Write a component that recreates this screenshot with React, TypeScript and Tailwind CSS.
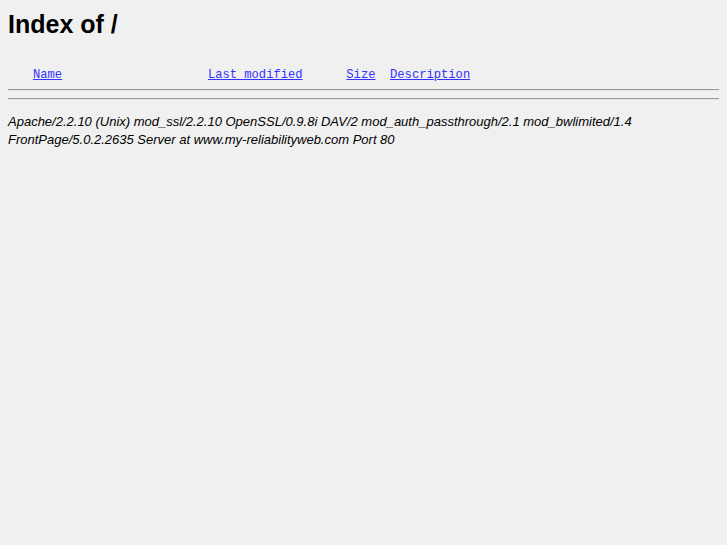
const mono = { fontFamily: '"Liberation Mono", monospace' }

const COLUMNS = [
  { label: 'Name', pad: 20 },
  { label: 'Last modified', pad: 6 },
  { label: 'Size', pad: 2 },
  { label: 'Description', pad: 0 },
]

function Rule() {
  return <div className="h-[2px] border-t border-[#9a9a9a] border-b border-b-[#e4e4e4]" />
}

export default function App() {
  return (
    <div className="min-h-[545px] bg-[#f0f0f0] px-2 pt-[9px] text-black font-['Liberation_Sans',sans-serif]">
      <h1 className="text-[25px] leading-[30px] font-bold">Index of /</h1>
      <pre className="mt-[28px] pl-[25px] text-[12.15px] leading-[16px] whitespace-pre" style={mono}>
        {COLUMNS.map((c) => (
          <span key={c.label}>
            <a href="#" className="text-[#3333ff] underline">
              {c.label}
            </a>
            {' '.repeat(c.pad)}
          </span>
        ))}
      </pre>
      <div className="mt-[6px] flex flex-col gap-[7px]">
        <Rule />
        <Rule />
      </div>
      <address className="mt-[13px] text-[13px] leading-[18px] italic">
        Apache/2.2.10 (Unix) mod_ssl/2.2.10 OpenSSL/0.9.8i DAV/2 mod_auth_passthrough/2.1 mod_bwlimited/1.4
        <br />
        FrontPage/5.0.2.2635 Server at www.my-reliabilityweb.com Port 80
      </address>
    </div>
  )
}
